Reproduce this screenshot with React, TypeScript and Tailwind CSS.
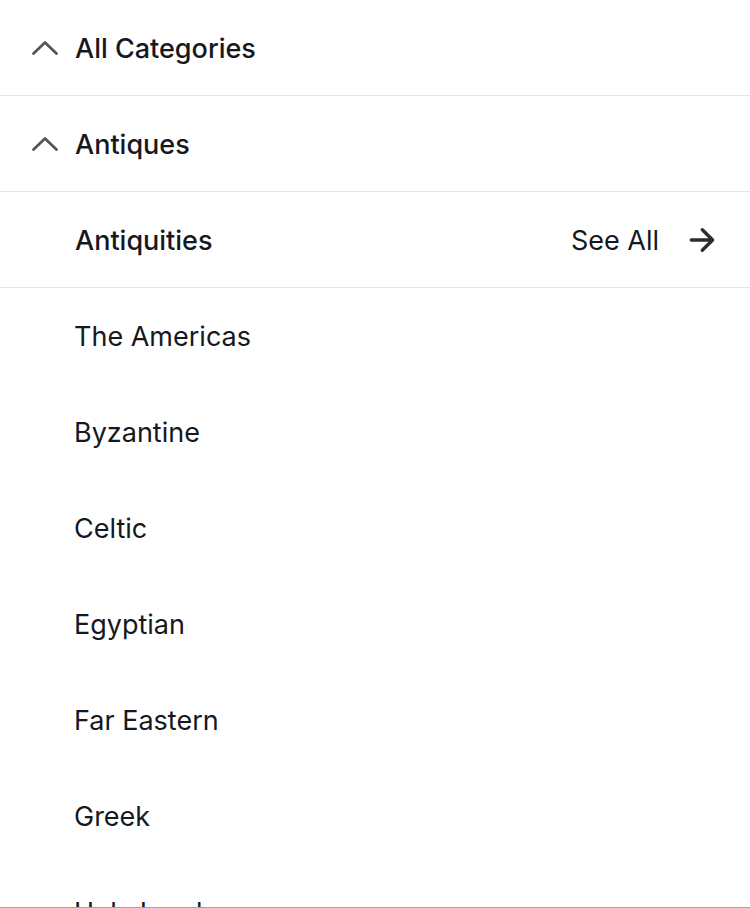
import { type ReactNode } from "react";

const regions = ["The Americas", "Byzantine", "Celtic", "Egyptian", "Far Eastern", "Greek", "Holy Land"];

function ChevronUp() {
  return (
    <svg aria-hidden="true" className="h-7 w-7 shrink-0" viewBox="0 0 28 28" fill="none" stroke="#555555" strokeWidth="2.8" strokeLinecap="round" strokeLinejoin="round">
      <path d="M2.5 19.5 14 8.5l11.5 11" />
    </svg>
  );
}

function BackRow({ children }: { children: ReactNode }) {
  return (
    <button type="button" className="flex h-24 w-full items-center gap-4 border-b border-[#e5e5e5] pl-[31px] text-left font-medium">
      <ChevronUp />
      <span className="pt-0.5">{children}</span>
    </button>
  );
}

export default function App() {
  return (
    <nav aria-label="Categories" className="h-screen overflow-hidden border-b border-[#a3a3a3] bg-white font-['Inter',sans-serif] text-[27px] leading-9 text-[#15191f]">
      <BackRow>All Categories</BackRow>
      <BackRow>Antiques</BackRow>
      <div className="flex h-24 items-center justify-between border-b border-[#e5e5e5] pr-8 pl-[75px]">
        <h2 className="pt-0.5 font-medium">Antiquities</h2>
        <a href="#antiquities" className="flex items-center gap-[27px]">
          <span className="pt-0.5">See All</span>
          <svg aria-hidden="true" className="h-8 w-8" viewBox="0 0 32 32" fill="none" stroke="#2b2e32" strokeWidth="3.4" strokeLinecap="round" strokeLinejoin="round">
            <path d="M5.3 16h21M16.3 5.7 26.6 16 16.3 26.3" />
          </svg>
        </a>
      </div>
      <ul>
        {regions.map((name) => (
          <li key={name}>
            <a href="#region" className="flex h-24 items-center pt-px pl-[74px]">{name}</a>
          </li>
        ))}
      </ul>
    </nav>
  );
}
